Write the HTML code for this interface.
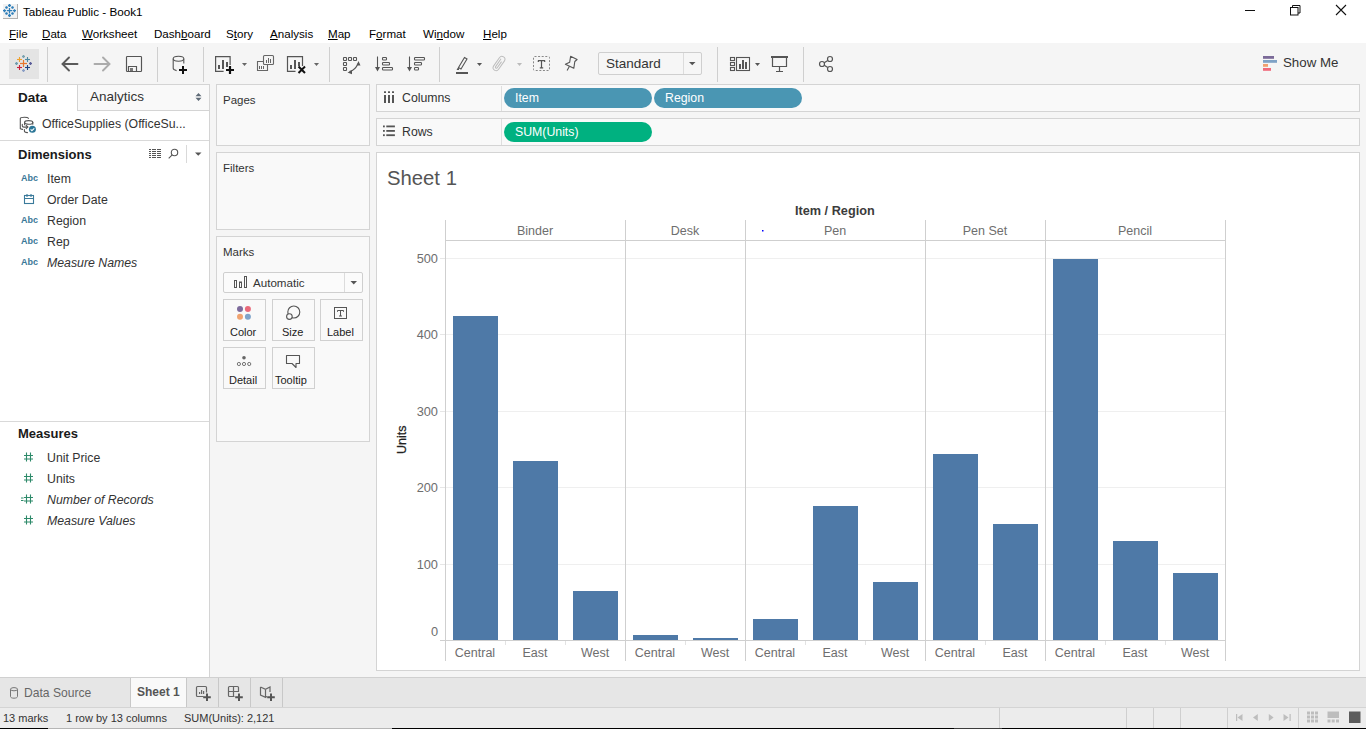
<!DOCTYPE html>
<html><head><meta charset="utf-8">
<style>
*{box-sizing:border-box;margin:0;padding:0}
html,body{width:1366px;height:729px;overflow:hidden;background:#f5f5f5;font-family:"Liberation Sans",sans-serif;color:#333}
.a{position:absolute}
.t{position:absolute;white-space:nowrap;line-height:1}
svg{position:absolute;overflow:visible}
.abc{font-size:9px;font-weight:bold;color:#3a7898}
.fld{font-size:12.3px;color:#333}
.card{background:#f9f9f9;border:1px solid #d4d4d4}
.ct{font-size:11.5px;color:#333}
.mb{width:43px;height:42px;background:#f9f9f9;border:1px solid #d0d0d0}
.mt{font-size:11px;color:#222}
.pill{height:20px;border-radius:10px}
.pt{font-size:12.3px;color:#fff}
.ax{font-size:12.8px;color:#6e6e6e}
.hd{font-size:12.5px;color:#6e6e6e}
.sb{font-size:11px;color:#333}
.mn{font-size:11.6px;color:#000}
.mn u{text-decoration:underline;text-underline-offset:1px}
</style></head><body>
<!-- title bar -->
<div class="a" style="left:0;top:0;width:1366px;height:43px;background:#fff"></div>
<div class="t" style="left:23px;top:6px;font-size:11.7px;color:#000">Tableau Public - Book1</div>

<!-- title icon -->
<div class="a" style="left:17px;top:4px;width:1px;height:15px;background:#b0b0b0"></div>
<div class="a" style="left:3px;top:18px;width:15px;height:1px;background:#b0b0b0"></div>
<div class="a" style="left:3px;top:4px;width:14px;height:14px;background:#f2f2f2"></div>
<svg style="left:0;top:0" width="20" height="20"><g stroke="#2f7fba" stroke-width="1.3" fill="none">
<path d="M9.5 8v5.5M6.8 10.7h5.5"/>
<path d="M9.5 4v3M8 5.5h3"/><path d="M9.5 14v3M8 15.5h3"/><path d="M4.5 9.2v3M3 10.7h3"/><path d="M14.5 9.2v3M13 10.7h3"/>
<path d="M6.5 6.2v2.6M5.2 7.5h2.6"/><path d="M12.5 6.2v2.6M11.2 7.5h2.6"/><path d="M6.5 12.2v2.6M5.2 13.5h2.6"/><path d="M12.5 12.2v2.6M11.2 13.5h2.6"/>
</g></svg>
<!-- window controls -->
<div class="a" style="left:1245px;top:10px;width:10px;height:1px;background:#111"></div>
<svg style="left:1288px;top:3px" width="16" height="16"><g stroke="#111" stroke-width="1" fill="none"><rect x="2.5" y="4.5" width="7.5" height="7.5"/><path d="M4.5 4.5v-2h7.5v7.5h-2"/></g></svg>
<svg style="left:1334px;top:3px" width="16" height="16"><g stroke="#111" stroke-width="1.1" fill="none"><path d="M2 2l10 10M12 2L2 12"/></g></svg>
<div class="t mn" style="left:9px;top:28px"><u>F</u>ile</div>
<div class="t mn" style="left:42px;top:28px"><u>D</u>ata</div>
<div class="t mn" style="left:82px;top:28px"><u>W</u>orksheet</div>
<div class="t mn" style="left:154px;top:28px">Dash<u>b</u>oard</div>
<div class="t mn" style="left:226px;top:28px">S<u>t</u>ory</div>
<div class="t mn" style="left:270px;top:28px"><u>A</u>nalysis</div>
<div class="t mn" style="left:328px;top:28px"><u>M</u>ap</div>
<div class="t mn" style="left:369px;top:28px">F<u>o</u>rmat</div>
<div class="t mn" style="left:423px;top:28px">Wi<u>n</u>dow</div>
<div class="t mn" style="left:483px;top:28px"><u>H</u>elp</div>
<!-- toolbar -->
<div class="a" style="left:0;top:43px;width:1366px;height:41px;background:#f5f5f5"></div>


<!-- toolbar icons -->
<div class="a" style="left:9px;top:49px;width:30px;height:30px;background:#e4e4e4"></div>
<svg style="left:0;top:43px" width="900" height="42">
<g><rect x="20.0" y="19.9" width="7.0" height="1.2" fill="#e8762b"/><rect x="22.9" y="17.0" width="1.2" height="7.0" fill="#e8762b"/><rect x="17.0" y="15.95" width="5.0" height="1.1" fill="#eea12e"/><rect x="18.95" y="14.0" width="1.1" height="5.0" fill="#eea12e"/><rect x="25.0" y="15.95" width="5.0" height="1.1" fill="#4f8aa1"/><rect x="26.95" y="14.0" width="1.1" height="5.0" fill="#4f8aa1"/><rect x="17.0" y="23.95" width="5.0" height="1.1" fill="#c8203c"/><rect x="18.95" y="22.0" width="1.1" height="5.0" fill="#c8203c"/><rect x="25.0" y="23.95" width="5.0" height="1.1" fill="#1f4480"/><rect x="26.95" y="22.0" width="1.1" height="5.0" fill="#1f4480"/><rect x="22.0" y="12.85" width="3.0" height="1.3" fill="#7aa3b0"/><rect x="22.85" y="12.0" width="1.3" height="3.0" fill="#7aa3b0"/><rect x="22.0" y="26.85" width="3.0" height="1.3" fill="#8a9ec5"/><rect x="22.85" y="26.0" width="1.3" height="3.0" fill="#8a9ec5"/><rect x="15.0" y="19.85" width="3.0" height="1.3" fill="#6f9cad"/><rect x="15.85" y="19.0" width="1.3" height="3.0" fill="#6f9cad"/><rect x="29.0" y="19.85" width="3.0" height="1.3" fill="#5b5d9a"/><rect x="29.85" y="19.0" width="1.3" height="3.0" fill="#5b5d9a"/></g>
<g stroke="#cfcfcf" stroke-width="1"><path d="M47.5 4v35M157.5 4v35M203.5 4v35M329.5 4v35M439.5 4v35M717.5 4v35M803.5 4v35"/></g>
<!-- back/forward -->
<g fill="none" stroke-width="1.7" stroke-linejoin="miter">
 <path d="M63 21h14.5M69 14.5l-6.5 6.5 6.5 6.5" stroke="#5a5a5a" stroke-width="1.9" stroke-linecap="round"/>
 <path d="M94.5 21h14.5M103 14.5l6.5 6.5-6.5 6.5" stroke="#ababab" stroke-width="1.9" stroke-linecap="round"/>
</g>
<!-- save -->
<g fill="none" stroke="#555" stroke-width="1.15"><rect x="126.5" y="13.5" width="15" height="15" rx=".8"/><path d="M128.5 28.5v-5h8v5"/></g>
<rect x="130" y="25" width="3" height="3" fill="#777"/>
<!-- new data source -->
<g fill="none" stroke="#555" stroke-width="1.1"><ellipse cx="178.5" cy="15.8" rx="5.3" ry="2.5"/><path d="M173.2 15.8v9.5c0 .9 1.5 1.9 3.4 2.3M183.8 15.8v4.7"/></g>
<path d="M183 23v8M179 27h8" stroke="#111" stroke-width="2"/>
<!-- new worksheet -->
<g fill="none" stroke="#555" stroke-width="1.2"><path d="M230.1 22V13.6h-14.5v14.8h8"/></g>
<g fill="#555"><rect x="218" y="22" width="2" height="4"/><rect x="222" y="17" width="2" height="9"/><rect x="226" y="19" width="2" height="5"/></g>
<path d="M230 23v8M226 27h8" stroke="#111" stroke-width="2.2"/>
<path d="M242 20h5l-2.5 3z" fill="#666"/>
<!-- duplicate -->
<g fill="none" stroke="#666" stroke-width="1.1"><rect x="263.5" y="12.5" width="10" height="9" rx="1"/><path d="M263.5 18.5h-6v9h10v-6"/></g>
<g fill="#666"><rect x="266" y="17" width="1" height="3"/><rect x="268" y="15" width="1" height="5"/><rect x="270" y="16" width="1" height="4"/><rect x="259" y="23" width="1" height="3"/><rect x="261" y="23" width="1" height="3"/><rect x="263" y="23" width="1" height="3"/></g>
<!-- clear sheet -->
<g fill="none" stroke="#555" stroke-width="1.2"><path d="M302.5 23V13.6h-15v14.8h8"/></g>
<g fill="#555"><rect x="290" y="22" width="2" height="4"/><rect x="294" y="17" width="2" height="9"/><rect x="298" y="19" width="2" height="4"/></g>
<path d="M298.5 23.5l6.5 6.5M305 23.5l-6.5 6.5" stroke="#111" stroke-width="2"/>
<path d="M314 20h5l-2.5 3z" fill="#666"/>
<!-- swap -->
<g fill="none" stroke="#555" stroke-width="1.1"><rect x="343.5" y="14.5" width="3" height="3" rx=".6"/><rect x="348.5" y="14.5" width="3" height="3" rx=".6"/><rect x="353.5" y="14.5" width="3" height="3" rx=".6"/><rect x="343.5" y="19.5" width="3" height="3" rx=".6"/><rect x="343.5" y="24.5" width="3" height="3" rx=".6"/>
<path d="M349.5 28.5c4-1 7-4 8.5-8"/></g>
<path d="M358.5 18l2 4.5h-4z M347.5 29.5l4.5-2.2v4z" fill="#555"/>
<!-- sort asc -->
<g stroke="#555" fill="none" stroke-width="1.1"><path d="M377.5 13.5v12"/><rect x="382.5" y="14.5" width="4" height="2.5" rx=".8"/><rect x="382.5" y="19.5" width="7" height="2.5" rx=".8"/><rect x="382.5" y="24.5" width="10" height="2.5" rx=".8"/></g>
<path d="M375 24h5l-2.5 4.5z" fill="#555"/>
<g stroke="#555" fill="none" stroke-width="1.1"><path d="M409.5 13.5v12"/><rect x="414.5" y="14.5" width="10" height="2.5" rx=".8"/><rect x="414.5" y="19.5" width="7" height="2.5" rx=".8"/><rect x="414.5" y="24.5" width="4" height="2.5" rx=".8"/></g>
<path d="M407 24h5l-2.5 4.5z" fill="#555"/>
<!-- highlighter -->
<g fill="none" stroke="#555" stroke-width="1.1"><path d="M458.5 24.5l6-10 2.5 1.5-6 10zM458.5 24.5l-1 2 1.5-.1"/></g>
<rect x="456" y="29" width="12" height="2" fill="#555"/>
<path d="M477 20h5l-2.5 3z" fill="#555"/>
<!-- paperclip -->
<g transform="translate(499 20.5) rotate(35)" fill="none" stroke="#bdbdbd" stroke-width="1"><rect x="-3" y="-8" width="6" height="16" rx="3"/><path d="M-1 -5v9.5a1 1 0 0 0 2 0V-3"/></g>
<path d="M517 20h5l-2.5 3z" fill="#bbb"/>
<!-- T box -->
<rect x="533.5" y="13.5" width="16" height="14" rx="1" fill="none" stroke="#888" stroke-width="1" stroke-dasharray="2 1.6"/>
<path d="M538 17.6h7M541.5 17.6v7.2M539.8 24.8h3.4M538.3 17.5v1.6M544.7 17.5v1.6" stroke="#555" stroke-width="1.2" fill="none"/>
<!-- pin -->
<path d="M570.6 13.3l6.5 3.2-2.3 2-1 6.8-8.4-4.1 4.3-2zM569.2 23.8l-2.1 3.8" fill="none" stroke="#555" stroke-width="1.1" stroke-linejoin="round"/>
<!-- Standard dropdown -->
</svg>
<div class="a" style="left:598px;top:52px;width:104px;height:23px;background:#f6f6f6;border:1px solid #cfcfcf;border-radius:2px"></div>
<div class="a" style="left:683px;top:53px;width:1px;height:21px;background:#dcdcdc"></div>
<div class="t" style="left:606px;top:57px;font-size:13.5px;color:#333">Standard</div>
<svg style="left:0;top:43px" width="900" height="42">
<path d="M689 19h6.5l-3.25 3.2z" fill="#555"/>
<!-- show cards -->
<g fill="none" stroke="#555" stroke-width="1.1"><rect x="730.5" y="14.5" width="4" height="3"/><rect x="730.5" y="19.5" width="4" height="3"/><rect x="730.5" y="24.5" width="4" height="3"/><rect x="736.5" y="14.5" width="13" height="13"/></g>
<g fill="#555"><rect x="739" y="21" width="2" height="5"/><rect x="742" y="17" width="2" height="9"/><rect x="745" y="19" width="2" height="7"/></g>
<path d="M755 20h5l-2.5 3z" fill="#555"/>
<!-- presentation -->
<g fill="none" stroke="#555" stroke-width="1.2"><path d="M772.5 14.5v9h14v-9M779.5 23.5v5M776 28.5h7"/><path d="M771 14h17" stroke-width="2"/></g>
<!-- share -->
<g fill="none" stroke="#555" stroke-width="1.2"><circle cx="822" cy="21" r="2.5"/><circle cx="830" cy="16" r="2.5"/><circle cx="830" cy="26" r="2.5"/><path d="M824.2 19.8l3.6-2.3M824.2 22.2l3.6 2.3"/></g>
</svg>
<!-- show me -->
<svg style="left:1263px;top:55px" width="20" height="18"><rect x="0" y="1" width="11" height="2.8" fill="#7b6a98"/><rect x="0" y="5" width="14" height="2.8" fill="#7fa2c6"/><rect x="0" y="9" width="5" height="2.8" fill="#f0a070"/><rect x="0" y="13" width="8" height="2.8" fill="#f06a7c"/></svg>
<div class="t" style="left:1283px;top:56px;font-size:13.3px;color:#333">Show Me</div>

<!-- left data pane -->

<div class="a" style="left:0;top:84px;width:210px;height:593px;background:#fff;border-top:1px solid #d4d4d4;border-right:1px solid #d4d4d4"></div>
<!-- tabs -->
<div class="a" style="left:77px;top:85px;width:132px;height:26px;background:#f9f9f9;border-left:1px solid #d4d4d4;border-bottom:1px solid #d4d4d4"></div>
<div class="t" style="left:18px;top:91px;font-size:13.5px;font-weight:bold;color:#1a1a1a">Data</div>
<div class="t" style="left:90px;top:90px;font-size:13.5px;color:#333">Analytics</div>
<svg style="left:194px;top:92px" width="10" height="10"><path d="M1.5 4.3h6L4.5 1z M1.5 5.7h6l-3 3.3z" fill="#5f6b77"/></svg>
<!-- data source -->
<svg style="left:18px;top:115px" width="22" height="20"><g fill="none" stroke="#555" stroke-width="1.1" stroke-linecap="round">
<path d="M2.3 13.3V3.6C2.3 2.8 4.2 2.3 6.4 2.3S10.1 2.7 10.5 3.3"/><path d="M2.3 13.3c0 .6 1 1 2.3 1.1"/>
<path d="M4.3 9.3v1.8c0 .6.5 1 1.6 1h3.6"/><path d="M8.2 10.5l1.7 1.6-1.7 1.6"/>
<ellipse cx="10.7" cy="7.4" rx="4.1" ry="1.8"/><path d="M6.6 7.4v2.4M14.8 7.4v1.8"/>
<path d="M6.4 14.6v1.5c0 .8 1.4 1.5 3.1 1.5"/></g>
<circle cx="14.4" cy="14.3" r="3.5" fill="#2b7697"/><path d="M12.6 14.4l1.3 1.3 2.4-2.4" stroke="#fff" stroke-width="1.1" fill="none"/></svg>
<div class="t" style="left:42px;top:118px;font-size:12.3px;color:#333">OfficeSupplies (OfficeSu...</div>
<div class="a" style="left:0;top:140px;width:209px;height:1px;background:#d9d9d9"></div>
<!-- Dimensions -->
<div class="t" style="left:18px;top:148px;font-size:13px;font-weight:bold;color:#1a1a1a">Dimensions</div>
<svg style="left:145px;top:145px" width="64" height="20"><g fill="#555"><rect x="4" y="4" width="2" height="1"/><rect x="7" y="4" width="4" height="1"/><rect x="12" y="4" width="4" height="1"/><rect x="4" y="6" width="2" height="1"/><rect x="7" y="6" width="4" height="1"/><rect x="12" y="6" width="4" height="1"/><rect x="4" y="8" width="2" height="1"/><rect x="7" y="8" width="4" height="1"/><rect x="12" y="8" width="4" height="1"/><rect x="4" y="10" width="2" height="1"/><rect x="7" y="10" width="4" height="1"/><rect x="12" y="10" width="4" height="1"/><rect x="4" y="12" width="2" height="1"/><rect x="7" y="12" width="4" height="1"/><rect x="12" y="12" width="4" height="1"/></g>
<g fill="none" stroke="#555" stroke-width="1.1"><circle cx="29.5" cy="7.5" r="3.2"/><path d="M27.2 9.8l-3.5 3.5"/></g>
<rect x="41" y="0" width="1" height="18" fill="#d9d9d9"/>
<path d="M50 7.5h6.5l-3.25 3.2z" fill="#555"/>
</svg>
<div class="t abc" style="left:21px;top:174px">Abc</div>
<div class="t fld" style="left:47px;top:173px;">Item</div>
<svg style="left:23px;top:193px" width="12" height="12"><g fill="none" stroke="#3b7a9b" stroke-width="1.1"><rect x="1.5" y="2.5" width="9" height="8"/><path d="M1.5 5.5h9M4 1v3M8 1v3"/></g></svg>
<div class="t fld" style="left:47px;top:194px;">Order Date</div>
<div class="t abc" style="left:21px;top:216px">Abc</div>
<div class="t fld" style="left:47px;top:215px;">Region</div>
<div class="t abc" style="left:21px;top:237px">Abc</div>
<div class="t fld" style="left:47px;top:236px;">Rep</div>
<div class="t abc" style="left:21px;top:258px">Abc</div>
<div class="t fld" style="left:47px;top:257px;font-style:italic;">Measure Names</div>
<div class="a" style="left:0;top:421px;width:209px;height:1px;background:#d9d9d9"></div>
<div class="t" style="left:18px;top:427px;font-size:13px;font-weight:bold;color:#1a1a1a">Measures</div>
<svg style="left:20px;top:451px" width="20" height="12"><g stroke="#2e8a6a" stroke-width="1.1" fill="none"><path d="M6.5 1.5l0 9M10.5 1.5l0 9M4 4.5h9M4 8h9"/></g></svg>
<div class="t fld" style="left:47px;top:452px;">Unit Price</div>
<svg style="left:20px;top:472px" width="20" height="12"><g stroke="#2e8a6a" stroke-width="1.1" fill="none"><path d="M6.5 1.5l0 9M10.5 1.5l0 9M4 4.5h9M4 8h9"/></g></svg>
<div class="t fld" style="left:47px;top:473px;">Units</div>
<svg style="left:20px;top:493px" width="20" height="12"><g stroke="#2e8a6a" stroke-width="1.1" fill="none"><path d="M6.5 1.5l0 9M10.5 1.5l0 9M4 4.5h9M4 8h9"/></g><path d="M1 5h2.5M1 7.5h2.5" stroke="#2e8a6a" stroke-width="1"/></svg>
<div class="t fld" style="left:47px;top:494px;font-style:italic;">Number of Records</div>
<svg style="left:20px;top:514px" width="20" height="12"><g stroke="#2e8a6a" stroke-width="1.1" fill="none"><path d="M6.5 1.5l0 9M10.5 1.5l0 9M4 4.5h9M4 8h9"/></g></svg>
<div class="t fld" style="left:47px;top:515px;font-style:italic;">Measure Values</div>

<!-- shelves column -->

<div class="a card" style="left:216px;top:84px;width:154px;height:62px"></div>
<div class="t ct" style="left:223px;top:95px">Pages</div>
<div class="a card" style="left:216px;top:152px;width:154px;height:78px"></div>
<div class="t ct" style="left:223px;top:163px">Filters</div>
<div class="a card" style="left:216px;top:236px;width:154px;height:206px"></div>
<div class="t ct" style="left:223px;top:247px">Marks</div>
<div class="a" style="left:223px;top:272px;width:140px;height:21px;background:#fbfbfb;border:1px solid #cfcfcf;border-radius:2px"></div>
<div class="a" style="left:344px;top:273px;width:1px;height:19px;background:#dcdcdc"></div>
<svg style="left:220px;top:270px" width="150" height="30"><g fill="none" stroke="#555" stroke-width="1"><rect x="14.5" y="10.5" width="2" height="7"/><rect x="19.5" y="12" width="2" height="5.5"/><rect x="24.5" y="6.5" width="2" height="11"/></g>
<path d="M130.5 11h6.5l-3.25 3.5z" fill="#555"/></svg>
<div class="t" style="left:253px;top:277px;font-size:11.6px;color:#333">Automatic</div>
<!-- mark buttons -->
<div class="a mb" style="left:223px;top:299px"></div>
<div class="a mb" style="left:272px;top:299px"></div>
<div class="a mb" style="left:320px;top:299px"></div>
<div class="a mb" style="left:223px;top:347px"></div>
<div class="a mb" style="left:272px;top:347px"></div>
<svg style="left:220px;top:295px" width="150" height="100">
<circle cx="20" cy="13.9" r="3" fill="#7d6b9c"/><circle cx="27.9" cy="13.9" r="3" fill="#e9697a"/><circle cx="20" cy="21.8" r="3" fill="#f0a370"/><circle cx="27.9" cy="21.8" r="3" fill="#7fa4ca"/>
<g stroke="#555" stroke-width="1.1"><circle cx="73.8" cy="17" r="6" fill="none"/><circle cx="69.4" cy="21.6" r="2.8" fill="#f9f9f9"/></g>
<rect x="114.5" y="12.5" width="12" height="11" fill="none" stroke="#555" stroke-width="1"/>
<path d="M117.5 15.5h6M120.5 15.5v5.5M119 21h3M117.5 15.5v1.3M123.5 15.5v1.3" stroke="#555" stroke-width="1" fill="none"/>
<circle cx="24" cy="62.8" r="1.8" fill="#666"/>
<g fill="none" stroke="#666" stroke-width=".9"><circle cx="18.9" cy="69" r="1.6"/><circle cx="24" cy="69" r="1.6"/><circle cx="29.2" cy="69" r="1.6"/></g>
<path d="M66.5 60.5h13v8h-3.5v4l-4-4h-5.5z" fill="none" stroke="#555" stroke-width="1.1" stroke-linejoin="round"/>
</svg>
<div class="t mt" style="left:230px;top:327px">Color</div>
<div class="t mt" style="left:282px;top:327px">Size</div>
<div class="t mt" style="left:327px;top:327px">Label</div>
<div class="t mt" style="left:229px;top:375px">Detail</div>
<div class="t mt" style="left:275px;top:375px">Tooltip</div>

<!-- columns/rows shelves -->
<div class="a card" style="left:376px;top:84px;width:984px;height:28px"></div>
<div class="a card" style="left:376px;top:118px;width:984px;height:28px"></div>
<div class="a" style="left:501px;top:86px;width:1px;height:25px;background:#dedede"></div>
<div class="a" style="left:501px;top:119px;width:1px;height:26px;background:#dedede"></div>
<svg style="left:376px;top:85px" width="30" height="62"><g fill="#555"><rect x="8" y="10" width="2" height="8"/><rect x="12" y="10" width="2" height="8"/><rect x="16" y="10" width="2" height="8"/><rect x="8" y="6.3" width="2" height="1.7"/><rect x="12" y="6.3" width="2" height="1.7"/><rect x="16" y="6.3" width="2" height="1.7"/>
<rect x="7" y="40.5" width="1.8" height="1.8"/><rect x="7" y="45" width="1.8" height="1.8"/><rect x="7" y="49.3" width="1.8" height="1.8"/><rect x="10.3" y="40.5" width="8.6" height="1.8"/><rect x="10.3" y="45" width="8.6" height="1.8"/><rect x="10.3" y="49.3" width="8.6" height="1.8"/></g></svg>
<div class="t" style="left:402px;top:92px;font-size:12.3px;color:#333">Columns</div>
<div class="t" style="left:402px;top:126px;font-size:12.3px;color:#333">Rows</div>
<div class="a pill" style="left:504px;top:88px;width:148px;background:#4a96b3"></div>
<div class="t pt" style="left:515px;top:92px">Item</div>
<div class="a pill" style="left:654px;top:88px;width:148px;background:#4a96b3"></div>
<div class="t pt" style="left:665px;top:92px">Region</div>
<div class="a pill" style="left:504px;top:122px;width:148px;background:#00b180"></div>
<div class="t pt" style="left:515px;top:126px">SUM(Units)</div>

<!-- view -->
<div class="a" style="left:376px;top:152px;width:984px;height:519px;background:#fff;border:1px solid #d4d4d4"></div>
<div class="t" style="left:387px;top:168px;font-size:20.3px;color:#555">Sheet 1</div>
<div class="t" style="left:795px;top:205px;font-size:12.7px;font-weight:bold;color:#3c3c3c">Item / Region</div>
<svg style="left:0;top:0" width="1366" height="729">
<g stroke="#efefef" stroke-width="1"><path d="M445 258.5h780M445 334.5h780M445 411.5h780M445 487.5h780M445 564.5h780"/></g>
<g stroke="#e6e6e6" stroke-width="1"><path d="M440 258.5h5M440 334.5h5M440 411.5h5M440 487.5h5M440 564.5h5"/></g>
<rect x="762" y="230" width="1.5" height="1.5" fill="#0000ff"/>
<rect x="453" y="316" width="45" height="324" fill="#4e79a7"/>
<rect x="513" y="461" width="45" height="179" fill="#4e79a7"/>
<rect x="573" y="591" width="45" height="49" fill="#4e79a7"/>
<rect x="633" y="635" width="45" height="5" fill="#4e79a7"/>
<rect x="693" y="638" width="45" height="2" fill="#4e79a7"/>
<rect x="753" y="619" width="45" height="21" fill="#4e79a7"/>
<rect x="813" y="506" width="45" height="134" fill="#4e79a7"/>
<rect x="873" y="582" width="45" height="58" fill="#4e79a7"/>
<rect x="933" y="454" width="45" height="186" fill="#4e79a7"/>
<rect x="993" y="524" width="45" height="116" fill="#4e79a7"/>
<rect x="1053" y="259" width="45" height="381" fill="#4e79a7"/>
<rect x="1113" y="541" width="45" height="99" fill="#4e79a7"/>
<rect x="1173" y="573" width="45" height="67" fill="#4e79a7"/>
<g stroke="#e3e3e3" stroke-width="1"><path d="M505.5 640v5"/><path d="M565.5 640v5"/><path d="M685.5 640v5"/><path d="M805.5 640v5"/><path d="M865.5 640v5"/><path d="M985.5 640v5"/><path d="M1105.5 640v5"/><path d="M1165.5 640v5"/></g>
<g stroke="#cfcfcf" stroke-width="1"><path d="M440 640.5h785"/><path d="M445 240.5h780"/><path d="M445.5 220v441"/><path d="M625.5 220v441"/><path d="M745.5 220v441"/><path d="M925.5 220v441"/><path d="M1045.5 220v441"/><path d="M1225.5 220v441"/></g>
</svg>
<div class="t ax" style="right:928px;top:253px">500</div>
<div class="t ax" style="right:928px;top:329px">400</div>
<div class="t ax" style="right:928px;top:406px">300</div>
<div class="t ax" style="right:928px;top:482px">200</div>
<div class="t ax" style="right:928px;top:559px">100</div>
<div class="t ax" style="right:928px;top:626px">0</div>
<div class="t" style="left:396px;top:453.5px;font-size:12.5px;color:#222;-webkit-text-stroke:0.25px #222;transform:rotate(-90deg);transform-origin:0 0">Units</div>
<div class="t hd" style="left:445px;width:180px;top:225px;text-align:center">Binder</div>
<div class="t hd" style="left:445px;width:60px;top:647px;text-align:center">Central</div>
<div class="t hd" style="left:505px;width:60px;top:647px;text-align:center">East</div>
<div class="t hd" style="left:565px;width:60px;top:647px;text-align:center">West</div>
<div class="t hd" style="left:625px;width:120px;top:225px;text-align:center">Desk</div>
<div class="t hd" style="left:625px;width:60px;top:647px;text-align:center">Central</div>
<div class="t hd" style="left:685px;width:60px;top:647px;text-align:center">West</div>
<div class="t hd" style="left:745px;width:180px;top:225px;text-align:center">Pen</div>
<div class="t hd" style="left:745px;width:60px;top:647px;text-align:center">Central</div>
<div class="t hd" style="left:805px;width:60px;top:647px;text-align:center">East</div>
<div class="t hd" style="left:865px;width:60px;top:647px;text-align:center">West</div>
<div class="t hd" style="left:925px;width:120px;top:225px;text-align:center">Pen Set</div>
<div class="t hd" style="left:925px;width:60px;top:647px;text-align:center">Central</div>
<div class="t hd" style="left:985px;width:60px;top:647px;text-align:center">East</div>
<div class="t hd" style="left:1045px;width:180px;top:225px;text-align:center">Pencil</div>
<div class="t hd" style="left:1045px;width:60px;top:647px;text-align:center">Central</div>
<div class="t hd" style="left:1105px;width:60px;top:647px;text-align:center">East</div>
<div class="t hd" style="left:1165px;width:60px;top:647px;text-align:center">West</div>

<!-- bottom tabs -->
<div class="a" style="left:0;top:677px;width:1366px;height:30px;background:#e6e6e6;border-top:1px solid #d0d0d0"></div>
<div class="a" style="left:131px;top:678px;width:55px;height:29px;background:#f9f9f9"></div>
<svg style="left:0;top:677px" width="300" height="30"><g stroke="#c8c8c8" stroke-width="1"><path d="M130.5 1v29M186.5 1v29M218.5 1v29M250.5 1v29M282.5 1v29"/></g>
<g fill="none" stroke="#777" stroke-width="1"><path d="M10.5 12.5v7c0 1 1.5 1.7 3.5 1.7s3.5-.7 3.5-1.7v-7"/><ellipse cx="14" cy="12.2" rx="3.5" ry="1.6"/></g>
<g fill="none" stroke="#666" stroke-width="1.2"><path d="M203.5 19.5h-6a1 1 0 0 1-1-1v-8a1 1 0 0 1 1-1h8a1 1 0 0 1 1 1v5"/><path d="M234.5 19.5h-5a1 1 0 0 1-1-1v-8a1 1 0 0 1 1-1h8a1 1 0 0 1 1 1v4.5M233.5 9.5v10M228.5 14.5h10"/><path d="M260.5 10l5 2.3 4.5-2.3v5M260.5 10v8l5 2.3v-8M265.5 20.3l1.5-.8"/></g>
<g fill="#666"><rect x="199" y="15" width="1.2" height="2"/><rect x="201" y="13" width="1.2" height="4"/><rect x="203" y="14" width="1.2" height="3"/></g>
<path d="M207 16.5v7.5M203.2 20.2h7.6M239 16.5v7.5M235.2 20.2h7.6M271 16.5v7.5M267.2 20.2h7.6" stroke="#555" stroke-width="2"/>
</svg>
<div class="t" style="left:24px;top:687px;font-size:12.1px;color:#666">Data Source</div>
<div class="t" style="left:137px;top:686px;font-size:12px;font-weight:bold;color:#555">Sheet 1</div>
<!-- status bar -->
<div class="a" style="left:0;top:707px;width:1366px;height:22px;background:#ececec;border-top:1px solid #d4d4d4"></div>
<div class="t sb" style="left:3px;top:713px">13 marks</div>
<div class="t sb" style="left:66px;top:713px">1 row by 13 columns</div>
<div class="t sb" style="left:184px;top:713px">SUM(Units): 2,121</div>
<svg style="left:0;top:707px" width="1366" height="22">
<g stroke="#cfcfcf" stroke-width="1"><path d="M999.5 1v20M1126.5 1v20M1153.5 1v20M1180.5 1v20M1227.5 1v20M1298.5 1v20"/></g>
<g fill="#bdbdbd"><rect x="1236" y="7" width="1.2" height="7"/><path d="M1242.5 7v7l-5-3.5z"/><path d="M1257.8 7v7l-4.8-3.5z"/><path d="M1268.8 7v7l4.8-3.5z"/><path d="M1283.5 7v7l5-3.5z"/><rect x="1289.5" y="7" width="1.2" height="7"/>
<rect x="1307" y="4.5" width="3" height="3"/><rect x="1311" y="4.5" width="3" height="3"/><rect x="1315" y="4.5" width="3" height="3"/><rect x="1307" y="8.5" width="3" height="3"/><rect x="1311" y="8.5" width="3" height="3"/><rect x="1315" y="8.5" width="3" height="3"/><rect x="1307" y="12.5" width="3" height="3"/><rect x="1311" y="12.5" width="3" height="3"/><rect x="1315" y="12.5" width="3" height="3"/>
<rect x="1327.5" y="4.5" width="11.5" height="6.5"/><rect x="1327.5" y="12.5" width="3" height="3"/><rect x="1331.7" y="12.5" width="3" height="3"/><rect x="1336" y="12.5" width="3" height="3"/></g>
<rect x="1349" y="4.5" width="11.5" height="11.5" fill="#5c5c5c"/>
</svg>
<!-- bottom edge -->
<div class="a" style="left:0;top:728px;width:48px;height:1px;background:#000"></div>
<div class="a" style="left:48px;top:728px;width:344px;height:1px;background:#b5b5b5"></div>
<div class="a" style="left:392px;top:728px;width:562px;height:1px;background:#000"></div>
<div class="a" style="left:954px;top:728px;width:48px;height:1px;background:#3c3c3c"></div>
<div class="a" style="left:1002px;top:728px;width:364px;height:1px;background:#000"></div>
</body></html>
